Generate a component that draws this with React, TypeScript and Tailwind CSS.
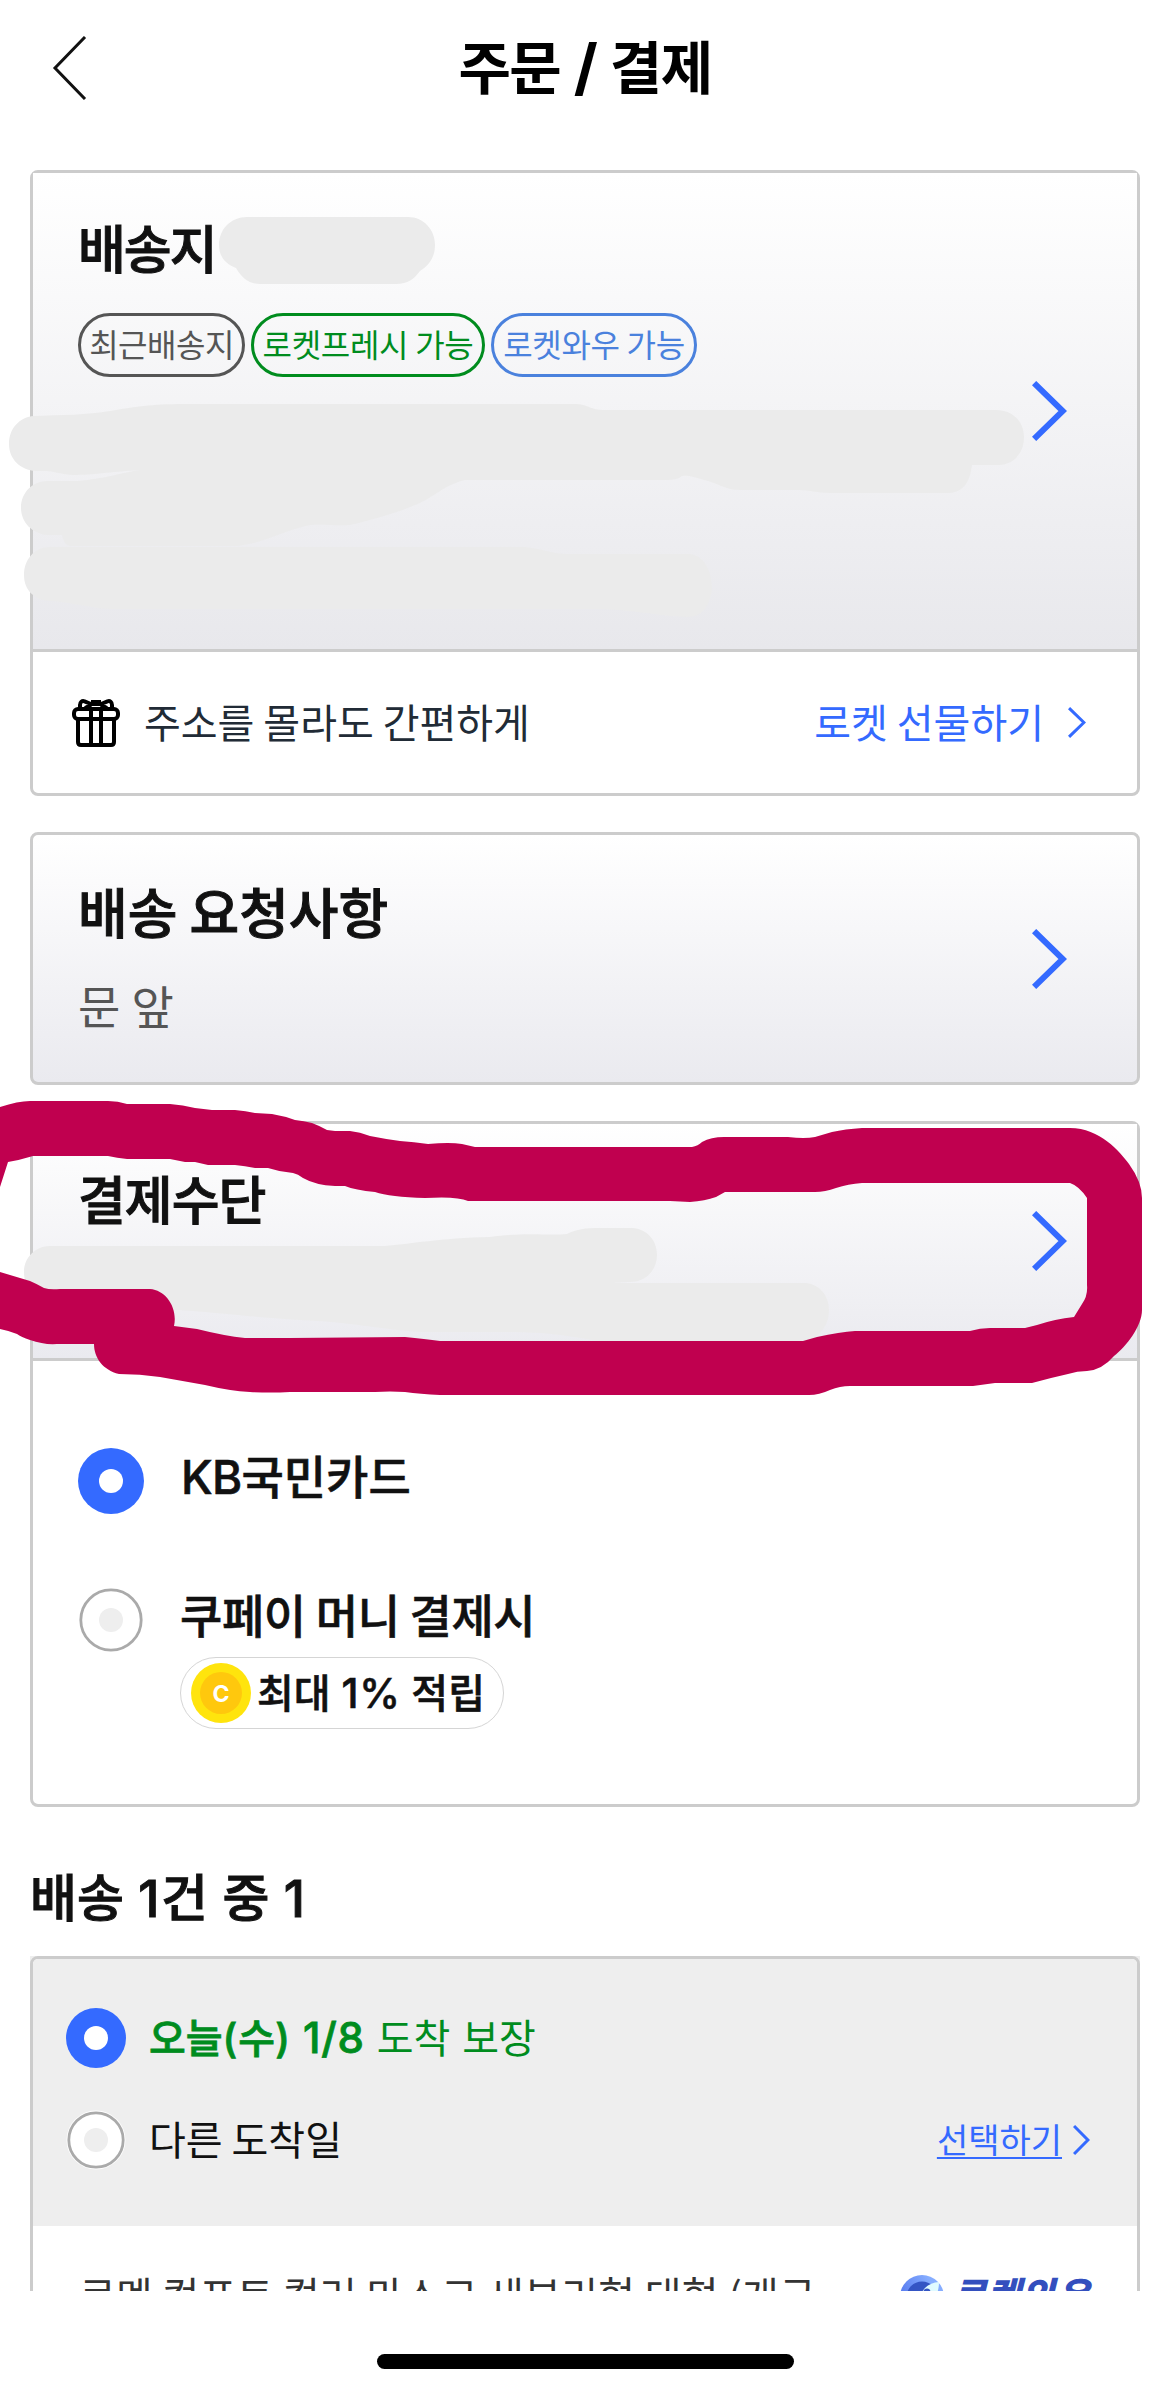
import type { ReactNode } from "react";

interface ChevronProps {
  width: number;
  height: number;
  stroke: number;
}

const Chevron: React.FC<ChevronProps> = ({ width, height, stroke }) => {
  const pad = stroke / 2;
  return (
    <svg width={width} height={height} className="shrink-0" fill="none">
      <path
        d={`M${pad * 0.7} ${pad * 0.7}L${width - pad * 1.4} ${height / 2}L${pad * 0.7} ${height - pad * 0.7}`}
        stroke="#346aff"
        strokeWidth={stroke}
      />
    </svg>
  );
};

const Radio: React.FC<{ checked?: boolean; small?: boolean }> = ({ checked, small }) => {
  const size = small ? 60 : 66;
  const c = size / 2;
  return (
    <svg width={size} height={size} className="shrink-0">
      {checked ? (
        <circle cx={c} cy={c} r={c} fill="#346aff" />
      ) : (
        <>
          <circle cx={c} cy={c} r={c - 0.5} fill="#fff" />
          <circle cx={c} cy={c} r={c - 2.8} fill="#fff" stroke="#aaa" strokeWidth="2.8" />
        </>
      )}
      <circle cx={c} cy={c} r="12" fill={checked ? "#fff" : "#eee"} />
    </svg>
  );
};

const GiftIcon = () => (
  <svg width="48" height="48" viewBox="0 0 48 48" fill="none" stroke="#000" strokeWidth="4" strokeLinejoin="round">
    <rect x="2" y="10" width="44" height="10" rx="4" />
    <path d="M6 20v23q0 3 3 3h30q3 0 3-3V20" />
    <path d="M19 10v36M29 10v36" />
    <path d="M8 10V6c0-3 2-4.500 4.500-3.700L19 5h10l6.500-2.700C38 1.500 40 3 40 6v4M19 3h10M13 9l6-3M35 9l-6-3" />
  </svg>
);

const Coin = () => (
  <svg width="60" height="60" className="shrink-0">
    <circle cx="30" cy="30" r="30" fill="#ffe40d" />
    <circle cx="30" cy="30" r="21" fill="#ffc80d" />
    <text x="30" y="38.500" textAnchor="middle" fill="#fff" fontSize="23" className="font-['Inter'] font-bold">
      C
    </text>
  </svg>
);

const RocketLogo = () => (
  <svg width="44" height="44" className="shrink-0">
    <defs>
      <linearGradient id="orb" x1="1" y1="0" x2="0" y2="0.5">
        <stop offset="0.3" stopColor="#86adff" />
        <stop offset="1" stopColor="#5478ee" />
      </linearGradient>
    </defs>
    <circle cx="22" cy="22" r="22" fill="url(#orb)" />
    <circle cx="22" cy="22" r="15.500" fill="#3455c4" />
    <path d="M39 7c-7 .5-13 3-17 10l-3 7 10 5c6-4 10-12 10-22Z" fill="#e0fbff" />
    <circle cx="27" cy="17" r="3.500" fill="#3455c4" />
  </svg>
);

const Chip: React.FC<{ className: string; children: ReactNode }> = ({ className, children }) => (
  <span
    className={`flex h-16 items-center justify-center rounded-full border-3 pb-[5px] text-[32px] leading-none ${className}`}
  >
    {children}
  </span>
);

// latin letters and digits inside korean labels
const Latin: React.FC<{ className?: string; children: ReactNode }> = ({ className = "", children }) => (
  <span className={`font-['Inter'] leading-[0] ${className}`}>{children}</span>
);

// hand-drawn strokes: grey ones hide private data, the red one marks the payment block
const Scribbles = () => (
  <svg width="1170" height="2393" className="pointer-events-none absolute left-0 top-0">
    <g fill="#ebebeb">
      <path d="M247 217H408C424 217 435 230 435 245C435 256 430 265 420 271C414 279 408 284 396 284H260C249 284 242 278 236 268C225 264 219 256 219 245C219 229 231 217 247 217Z" />
      <path d="M9 444C9 428 20 417 34 416C60 415 88 415 110 411C135 407 150 404 185 404H577C588 405 592 410 603 410H996C1013 410 1024 422 1024 437C1024 452 1015 464 999 465H972C970 482 963 493 948 493H830C815 493 812 490 798 490H740C724 490 716 482 704 480C694 477 688 475 682 476C678 479 674 480 665 480H465C445 485 438 494 420 503C400 512 375 519 350 525C335 526 325 524 310 525C285 530 265 543 237 546H70C65 545 63 540 62 535H48C32 534 21 522 21 508C21 492 33 481 48 481H78C103 479 120 473 140 470C108 472 95 475 72 475C60 474 52 471 47 471H36C20 470 9 459 9 444Z" />
      <path d="M24 575C24 560 34 547 50 547H525C545 549 550 554 570 554H690C704 556 712 570 712 590C709 608 701 617 688 617C655 616 635 609 590 609H110C90 608 70 602 50 601C34 600 24 590 24 575Z" />
      <path d="M24 1272C24 1257 36 1246 50 1246H385C410 1244 440 1238 490 1237C525 1232 550 1236 567 1234C577 1229 585 1228 600 1228H632C648 1229 657 1241 657 1255C657 1270 646 1282 630 1282L612 1283H805C820 1284 829 1296 829 1310C829 1325 821 1334 810 1341H600C560 1335 550 1332 500 1332H420C380 1329 350 1322 300 1320C250 1317 215 1312 176 1310L50 1300C34 1298 24 1288 24 1272Z" />
    </g>
    <path
      fill="#c0004f"
      d="M0 1107Q18 1101 30 1101H108Q118 1101 127 1104H170Q183 1105 195 1108L212 1110H235Q246 1111 255 1113L272 1114Q284 1116 295 1120Q304 1121 312 1123Q320 1126 327 1130L335 1131H350Q360 1132 370 1136Q385 1139 400 1141Q414 1142 428 1144Q450 1142 462 1144L475 1147H692Q698 1146 702 1142Q711 1137 724 1137H788Q805 1139 815 1137L832 1132Q845 1129 862 1128H1070C1100 1128 1120 1152 1129 1164Q1142 1182 1142 1198V1310C1142 1326 1126 1347 1114 1356Q1102 1370 1087 1371Q1077 1371 1068 1374Q1050 1378 1032 1383H995L973 1386H850Q840 1386 830 1390Q819 1395 809 1395H440Q420 1394 405 1392Q390 1391 375 1392H290Q270 1393 250 1392Q230 1391 205 1385L160 1377Q140 1374 119 1374C103 1370 94 1358 94 1344H57Q44 1345 30 1340Q21 1337 17 1334Q10 1331 0 1329V1272L30 1281Q37 1284 44 1288Q50 1290 60 1289H150C166 1290 178 1308 174 1326L197 1329Q225 1336 245 1338H290L405 1337Q425 1339 440 1341H803L817 1337Q840 1332 855 1331H970Q980 1328 990 1328H1025L1037 1325Q1055 1319 1074 1317L1082 1304Q1088 1296 1087 1285V1198Q1079 1186 1070 1183H862Q848 1184 836 1188Q825 1192 815 1192H725L716 1197Q705 1201 690 1202L670 1201H468Q457 1196 425 1198Q390 1197 375 1192Q355 1190 345 1186H335Q315 1185 303 1178Q298 1174 293 1173Q280 1172 268 1168H255Q245 1166 235 1165H208L195 1162H185L170 1159H127Q117 1158 108 1156H33Q20 1160 8 1162L0 1187Z"
    />
  </svg>
);

const App = () => {
  return (
    <div className="relative flex h-[2393px] w-[1170px] flex-col overflow-hidden bg-white font-['Noto_Sans_CJK_KR',sans-serif] text-[#111]">
      <header className="grid h-[170px] grid-cols-[1fr_auto_1fr] items-start px-[52px]">
        <svg width="36" height="64" fill="none" className="mt-9" stroke="#111" strokeWidth="3">
          <path d="M33 1L3 32L33 63" />
        </svg>
        <h1 className="mt-9 text-[57px] font-bold leading-none tracking-[-1.500px] text-black [word-spacing:2px]">
          주문 <Latin className="text-[62px]">/</Latin> 결제
        </h1>
      </header>

      <section className="mx-[30px] h-[626px] rounded-lg border-3 border-[#ccc]">
        <div className="flex h-[479px] items-center justify-between border-b-3 border-[#ccc] bg-linear-to-b from-white to-[#e8e8ec] pl-[45px] pr-[70px]">
          <div className="self-start pt-12">
            <h2 className="text-[52px] font-medium leading-none tracking-[-2px] [-webkit-text-stroke:1px_#111]">배송지</h2>
            <div className="mt-10 flex gap-[6px]">
              <Chip className="w-[167px] border-[#555] tracking-[-0.5px] text-[#555]">최근배송지</Chip>
              <Chip className="w-[234px] border-[#008c1e] tracking-[-0.3px] text-[#008c1e]">로켓프레시 가능</Chip>
              <Chip className="w-[206px] border-[#4a81dd] tracking-[-0.3px] text-[#4a81dd]">로켓와우 가능</Chip>
            </div>
          </div>
          <Chevron width={35} height={60} stroke={6} />
        </div>
        <div className="flex h-[141px] items-center pl-[39px] pr-[51px]">
          <GiftIcon />
          <p className="ml-6 pb-1 text-[40px] leading-none text-[#212b36]">주소를 몰라도 간편하게</p>
          <p className="ml-auto mr-[24px] pb-1 text-[40px] leading-none text-[#346aff]">로켓 선물하기</p>
          <Chevron width={18} height={31} stroke={3} />
        </div>
      </section>

      <section className="mx-[30px] mt-9 flex h-[253px] items-center justify-between rounded-lg border-3 border-[#ccc] bg-linear-to-b from-white to-[#eaeaef] pl-[45px] pr-[70px]">
        <div className="self-start pt-[49px]">
          <h2 className="text-[54px] font-medium leading-none [-webkit-text-stroke:1px_#111]">배송 요청사항</h2>
          <p className="mt-[43px] text-[46px] leading-none tracking-[0.5px] text-[#555]">문 앞</p>
        </div>
        <Chevron width={35} height={60} stroke={6} />
      </section>

      <section className="mx-[30px] mt-9 h-[686px] rounded-lg border-3 border-[#ccc]">
        <div className="flex h-[237px] items-center justify-between border-b-3 border-[#ccc] bg-linear-to-b from-white to-[#eaeaef] pl-[45px] pr-[70px]">
          <h2 className="self-start pt-12 text-[52px] font-medium leading-none tracking-[-1px] [-webkit-text-stroke:1px_#111]">
            결제수단
          </h2>
          <Chevron width={35} height={60} stroke={6} />
        </div>
        <div className="flex flex-col gap-[73px] pl-[45px] pt-[87px]">
          <div className="flex gap-9">
            <Radio checked />
            <p className="ml-px mt-[3px] text-[46px] font-medium leading-none [-webkit-text-stroke:0.6px_#111]">
              <Latin className="tracking-[-0.7px]">KB</Latin>국민카드
            </p>
          </div>
          <div className="flex gap-9">
            <Radio />
            <div className="mt-[3px]">
              <p className="text-[46px] font-medium leading-none tracking-[-0.4px] [-webkit-text-stroke:0.6px_#111]">
                쿠페이 머니 결제시
              </p>
              <div className="mt-[21px] flex h-[72px] w-[324px] items-center rounded-full border border-[#d5d5d5] pl-[10px]">
                <Coin />
                <span className="ml-[6px] pb-[5px] text-[40px] font-medium leading-none [-webkit-text-stroke:0.6px_#111] [word-spacing:2px]">
                  최대 <Latin className="text-[41px] tracking-[0.5px]">1%</Latin> 적립
                </span>
              </div>
            </div>
          </div>
        </div>
      </section>

      <h2 className="ml-[30px] mt-[63px] text-[51px] font-medium leading-none [-webkit-text-stroke:1px_#111] [word-spacing:3px]">
        배송 <Latin className="tracking-[1.5px]">1</Latin>건 중 <Latin>1</Latin>
      </h2>

      <div className="mx-[30px] mt-[35px] h-[335px] overflow-hidden bg-[#eee]">
        <section className="h-[400px] overflow-hidden rounded-lg border-3 border-[#ccc] bg-white">
          <div className="h-[267px] bg-[#eee] pl-[33px] pr-[47px] pt-[49px]">
            <div className="flex items-center gap-[23px] text-[40px] leading-none text-[#008c1e]">
              <Radio checked small />
              <p className="pb-[5px] [word-spacing:3px]">
                <b className="font-medium [-webkit-text-stroke:0.8px_#008c1e]">
                  오늘<Latin className="tracking-[1px]">(</Latin>수<Latin className="tracking-[1px]">)</Latin>{" "}
                  <Latin className="text-[42px] tracking-[0.8px]">1/8</Latin>
                </b>{" "}
                도착 보장
              </p>
            </div>
            <div className="mt-[42px] flex items-center gap-[23px]">
              <Radio small />
              <p className="pb-1 text-[40px] leading-none">다른 도착일</p>
              <a className="ml-auto pb-[3px] text-[34px] leading-none text-[#346aff] underline decoration-2 underline-offset-4 [text-decoration-skip-ink:none]">
                선택하기
              </a>
              <span className="-ml-3">
                <Chevron width={17} height={30} stroke={3} />
              </span>
            </div>
          </div>
          <div className="flex justify-between pl-[46px] pr-[46px] pt-[49px]">
            <p className="-mt-px whitespace-nowrap text-[40px] leading-none tracking-[0.3px] text-[#333]">
              로멘 컴포트 컬러 마스크 새부리형 대형 (개구
            </p>
            <div className="flex">
              <RocketLogo />
              <span className="ml-2 whitespace-nowrap text-[37px] font-black italic leading-none tracking-[0.8px] text-[#334fbe]">
                로켓와우
              </span>
            </div>
          </div>
        </section>
      </div>

      <div className="mx-auto mt-[63px] h-[15px] w-[417px] rounded-full bg-black" />

      <Scribbles />
    </div>
  );
};

export default App;
